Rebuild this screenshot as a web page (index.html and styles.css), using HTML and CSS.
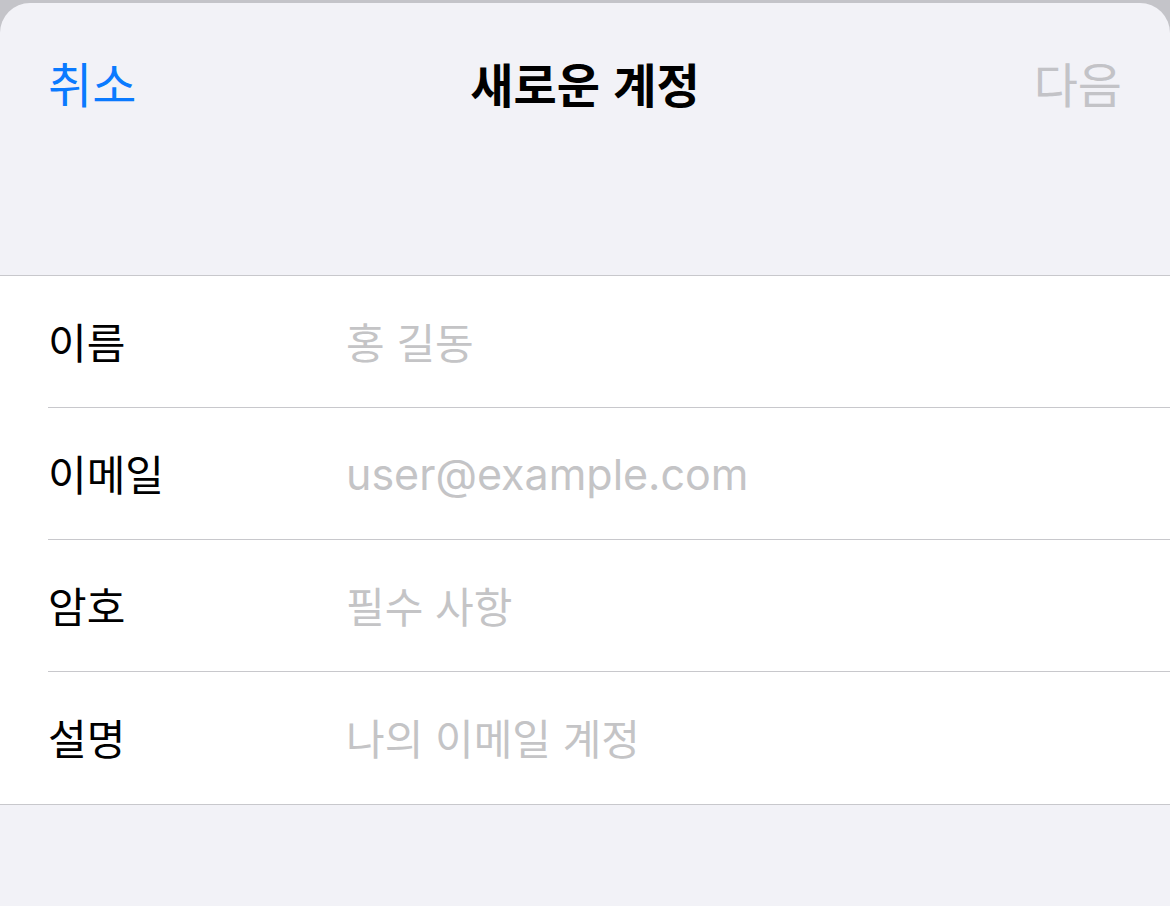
FILE: index.html
```html
<!DOCTYPE html>
<html lang="ko">
<head>
<meta charset="utf-8">
<title>새로운 계정</title>
<link rel="stylesheet" href="styles.css">
</head>
<body>
<div class="sheet">
  <header class="nav">
    <span class="nav-btn cancel">취소</span>
    <h1 class="nav-title">새로운 계정</h1>
    <span class="nav-btn next">다음</span>
  </header>
  <section class="form">
    <div class="row"><div class="row-inner"><span class="label">이름</span><span class="placeholder">홍 길동</span></div></div>
    <div class="row"><div class="row-inner"><span class="label">이메일</span><span class="placeholder latin">user@example.com</span></div></div>
    <div class="row"><div class="row-inner"><span class="label">암호</span><span class="placeholder">필수 사항</span></div></div>
    <div class="row"><div class="row-inner last"><span class="label">설명</span><span class="placeholder">나의 이메일 계정</span></div></div>
  </section>
</div>
</body>
</html>
```
FILE: styles.css
```css
html, body {
  margin: 0;
  padding: 0;
}
body {
  background: #c4c4c9;
  font-family: Inter, "Noto Sans CJK KR", sans-serif;
  width: 1170px;
  height: 906px;
  overflow: hidden;
}
.sheet {
  margin-top: 3px;
  height: 903px;
  background: #f2f2f7;
  border-radius: 30px 30px 0 0;
}
.nav {
  height: 168px;
  box-sizing: border-box;
  display: flex;
  align-items: center;
  justify-content: space-between;
  padding: 0 48px 10px 48px;
  position: relative;
}
.nav-btn {
  font-family: "Noto Sans CJK KR", sans-serif;
  font-size: 48px;
  line-height: 1;
}
.cancel { color: #0a7aff; }
.next { color: #c3c3c7; }
.nav-title {
  margin: 0;
  font-family: "Noto Sans CJK KR", sans-serif;
  font-size: 47px;
  font-weight: 700;
  color: #000;
  line-height: 1;
  position: absolute;
  left: 0;
  right: 0;
  text-align: center;
  pointer-events: none;
}
.form {
  margin-top: 104px;
  background: #fff;
  border-top: 1px solid #c8c8cc;
  border-bottom: 1px solid #c8c8cc;
}
.row {
  padding-left: 48px;
}
.row-inner {
  height: 132px;
  box-sizing: border-box;
  padding-bottom: 2px;
  display: flex;
  align-items: center;
  border-bottom: 1px solid #c8c8cc;
}
.row-inner.last {
  border-bottom: none;
}
.label {
  width: 298px;
  flex: none;
  font-family: "Noto Sans CJK KR", sans-serif;
  font-size: 42px;
  color: #000;
  line-height: 1;
}
.placeholder {
  font-family: "Noto Sans CJK KR", sans-serif;
  font-size: 42px;
  color: #c4c4c6;
  line-height: 1;
}
.placeholder.latin {
  font-family: Inter, sans-serif;
  font-size: 43px;
  padding-top: 4px;
}
```
